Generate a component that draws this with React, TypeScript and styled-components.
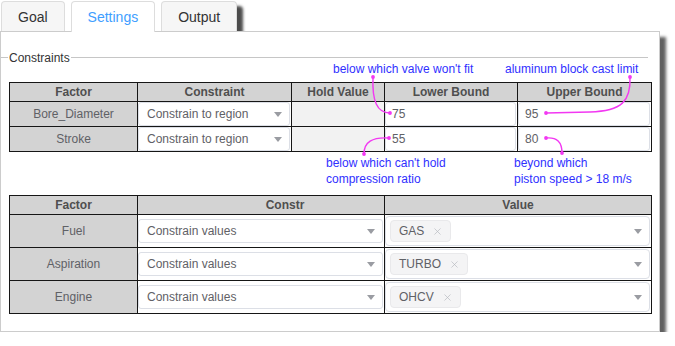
import React from 'react';
import styled, { createGlobalStyle } from 'styled-components';
import { X } from 'lucide-react';

const GlobalStyle = createGlobalStyle`
    body {
        margin: 0;
        background: #fff;
        font-family: "Liberation Sans", Arial, sans-serif;
    }
`;

const Frame = styled.div`
    width: 660px;
`;

const TabBar = styled.div`
    display: flex;
    align-items: flex-end;
    gap: 6px;
    height: 31px;
    padding-left: 1px;
    box-sizing: border-box;
`;

const Tab = styled.div<{ $active?: boolean; $shadow?: boolean }>`
    position: relative;
    z-index: ${(p) => (p.$active ? 2 : 0)};
    height: ${(p) => (p.$active ? '31px' : '30px')};
    margin-bottom: ${(p) => (p.$active ? '-1px' : '0')};
    padding: 0 16px;
    box-sizing: border-box;
    display: flex;
    align-items: center;
    justify-content: center;
    font-size: 14px;
    padding-bottom: ${(p) => (p.$active ? '1px' : '0')};
    color: ${(p) => (p.$active ? '#409eff' : '#333')};
    background: ${(p) => (p.$active ? '#fff' : '#f6f6f6')};
    border: 1px solid #dddddd;
    border-bottom: none;
    border-radius: 4px 4px 0 0;
    box-shadow: ${(p) => (p.$shadow ? '6px 5px 3px rgba(0, 0, 0, 0.7)' : 'none')};
`;

const Panel = styled.div`
    position: relative;
    z-index: 1;
    height: 301px;
    box-sizing: border-box;
    background: #fff;
    border: 1px solid #cccccc;
    box-shadow: 6px 6px 3px rgba(0, 0, 0, 0.62);
`;

const Legend = styled.div`
    display: flex;
    align-items: center;
    gap: 1px;
    height: 15px;
    margin: 18px 11px 0 0;
    font-size: 12px;
    color: #333;
    &::before {
        content: '';
        width: 7px;
        height: 1px;
        background: #c6c6c6;
    }
    &::after {
        content: '';
        flex: 1;
        height: 1px;
        background: #c6c6c6;
    }
`;

const Section = styled.div`
    position: relative;
    padding: 17px 0 43px 8px;
`;

const Note = styled.div<{ $left: number; $top: number }>`
    position: absolute;
    left: ${(p) => p.$left}px;
    top: ${(p) => p.$top}px;
    font-size: 12px;
    line-height: 16px;
    color: #3030ff;
    white-space: nowrap;
`;

const Leaders = styled.svg`
    position: absolute;
    left: 0;
    top: 0;
    overflow: visible;
    pointer-events: none;
`;

const Grid = styled.div<{ $cols: string; $rows: string }>`
    display: grid;
    grid-template-columns: ${(p) => p.$cols};
    grid-template-rows: ${(p) => p.$rows};
    gap: 1px;
    padding: 1px;
    width: fit-content;
    background: #161616;
`;

const Table2 = styled(Grid)`
    margin-left: 8px;
`;

const Head = styled.div<{ $shift?: number }>`
    display: flex;
    align-items: center;
    justify-content: center;
    padding-left: ${(p) => p.$shift ?? 0}px;
    background: #d3d3d3;
    font-size: 12px;
    font-weight: bold;
    color: #4f4f4f;
`;

const Factor = styled.div`
    display: flex;
    align-items: center;
    justify-content: center;
    background: #d3d3d3;
    font-size: 12px;
    color: #5f6166;
`;

const Cell = styled.div<{ $bg?: string }>`
    display: flex;
    align-items: center;
    padding-right: 1px;
    background: ${(p) => p.$bg || '#fff'};
`;

const Box = styled.div<{ $h?: string; $pl?: number }>`
    flex: 1;
    height: ${(p) => p.$h || '100%'};
    box-sizing: border-box;
    display: flex;
    align-items: center;
    justify-content: space-between;
    padding: 0 7px 0 ${(p) => p.$pl ?? 8}px;
    border: 1px solid #dcdfe6;
    border-radius: 3px;
    background: #fff;
    font-size: 12px;
    color: #5f6166;
`;

const ValueBox = styled(Box)`
    margin: 1px 0;
    height: 30px;
    border-radius: 4px;
`;

const Caret = styled.span`
    width: 0;
    height: 0;
    border-left: 4.5px solid transparent;
    border-right: 4.5px solid transparent;
    border-top: 5px solid #9a9ca2;
`;

const Chip = styled.span`
    display: inline-flex;
    align-items: center;
    gap: 8px;
    height: 22px;
    box-sizing: border-box;
    padding: 0 7px 0 8px;
    background: #f4f4f5;
    border: 1px solid #e9e9eb;
    border-radius: 4px;
    font-size: 12px;
    color: #5f6166;
`;

const bounds = [
    { factor: 'Bore_Diameter', lower: '75', upper: '95' },
    { factor: 'Stroke', lower: '55', upper: '80' },
];

const levels = [
    { factor: 'Fuel', value: 'GAS' },
    { factor: 'Aspiration', value: 'TURBO' },
    { factor: 'Engine', value: 'OHCV' },
];

const dots: [number, number][] = [
    [373, 77],
    [390, 113],
    [630, 77],
    [546, 113],
    [389, 138],
    [364, 154],
    [546, 138],
    [562, 153],
];

const App = () => {
    return (
        <Frame>
            <GlobalStyle />
            <TabBar>
                <Tab>Goal</Tab>
                <Tab $active>Settings</Tab>
                <Tab $shadow>Output</Tab>
            </TabBar>
            <Panel>
                <Legend>Constraints</Legend>
                <Section>
                    <Grid $cols="127px 153px 92px 132px 133px" $rows="18px 24px 24px">
                        <Head>Factor</Head>
                        <Head>Constraint</Head>
                        <Head>Hold Value</Head>
                        <Head>Lower Bound</Head>
                        <Head>Upper Bound</Head>
                        {bounds.map((row) => (
                            <React.Fragment key={row.factor}>
                                <Factor>{row.factor}</Factor>
                                <Cell>
                                    <Box>
                                        Constrain to region
                                        <Caret />
                                    </Box>
                                </Cell>
                                <Cell $bg="#f2f2f2" />
                                <Cell>
                                    <Box $pl={6}>{row.lower}</Box>
                                </Cell>
                                <Cell>
                                    <Box $pl={6}>{row.upper}</Box>
                                </Cell>
                            </React.Fragment>
                        ))}
                    </Grid>

                    <Note $left={332} $top={-4}>below which valve won't fit</Note>
                    <Note $left={504} $top={-4}>aluminum block cast limit</Note>
                    <Note $left={325} $top={90}>
                        below which can't hold
                        <br />
                        compression ratio
                    </Note>
                    <Note $left={513} $top={90}>
                        beyond which
                        <br />
                        piston speed &gt; 18 m/s
                    </Note>

                    <Leaders width="660" height="130">
                        <g transform="translate(-1,-65)" fill="none" stroke="#f238f2" strokeWidth="1.4">
                            <path d="M373,77 C372,101 377,113 390,113" />
                            <path d="M630,77 C631,101 622,111 590,112 L546,113" />
                            <path d="M389,138 C372,137 364,142 364,154" />
                            <path d="M546,138 C557,137 562,142 562,153" />
                            {dots.map(([x, y]) => (
                                <circle key={`${x}-${y}`} cx={x} cy={y} r="1.9" fill="#f238f2" stroke="none" />
                            ))}
                        </g>
                    </Leaders>
                </Section>

                <Table2 $cols="127px 246px 266px" $rows="18px 32px 32px 32px">
                    <Head>Factor</Head>
                    <Head $shift={48}>Constr</Head>
                    <Head>Value</Head>
                    {levels.map((row) => (
                        <React.Fragment key={row.factor}>
                            <Factor>{row.factor}</Factor>
                            <Cell>
                                <Box $h="24px">
                                    Constrain values
                                    <Caret />
                                </Box>
                            </Cell>
                            <Cell>
                                <ValueBox $pl={4}>
                                    <Chip>
                                        {row.value}
                                        <X size={11} strokeWidth={1.4} color="#b3b6bc" />
                                    </Chip>
                                    <Caret />
                                </ValueBox>
                            </Cell>
                        </React.Fragment>
                    ))}
                </Table2>
            </Panel>
        </Frame>
    );
};

export default App;
